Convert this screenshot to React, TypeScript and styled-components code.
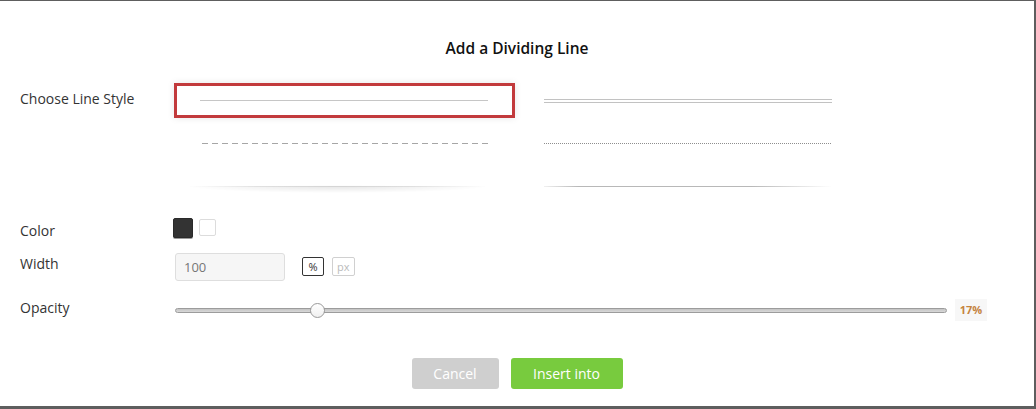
import React from 'react';
import styled, { createGlobalStyle } from 'styled-components';

const GlobalStyle = createGlobalStyle`
  html, body {
    margin: 0;
    padding: 0;
    background: #5e5e5e;
    font-family: 'Open Sans', 'Liberation Sans', sans-serif;
  }
`;

const Dialog = styled.div`
  width: 1034px;
  height: 405px;
  margin-top: 1px;
  background: #fff;
  display: flex;
  flex-direction: column;
  color: #333;
`;

const Title = styled.h2`
  margin: 37px 0 0;
  height: 21px;
  line-height: 21px;
  font-size: 15.5px;
  font-weight: 600;
  color: #111;
  text-align: center;
`;

const Form = styled.div`
  padding: 0 20px;
  display: flex;
  flex-direction: column;
`;

const Row = styled.div<{ $top: number }>`
  display: flex;
  align-items: flex-start;
  margin-top: ${(p) => p.$top}px;
`;

const Label = styled.label<{ $pad?: number }>`
  width: 155px;
  flex-shrink: 0;
  padding-top: ${(p) => p.$pad ?? 0}px;
  font-size: 14px;
  line-height: 20px;
  color: #333;
`;

const StyleGrid = styled.div`
  margin-left: -1px;
  display: grid;
  grid-template-columns: 341px 341px;
  grid-auto-rows: 35px;
  column-gap: 3px;
  row-gap: 8px;
`;

const StyleCell = styled.div<{ $selected?: boolean }>`
  box-sizing: border-box;
  display: flex;
  align-items: center;
  padding: 0 24px 0 23px;
  border: 3px solid ${(p) => (p.$selected ? '#c23a3c' : 'transparent')};
  box-shadow: ${(p) => (p.$selected ? '0 0 7px rgba(0, 0, 0, 0.1)' : 'none')};
  cursor: pointer;
`;

const SolidLine = styled.div`
  width: 100%;
  height: 1px;
  background: #c6c6c6;
`;

const DoubleLine = styled.div`
  width: 100%;
  height: 2px;
  border-top: 1px solid #c2c2c2;
  border-bottom: 1px solid #c2c2c2;
`;

const DashedLine = styled.div`
  width: 100%;
  height: 1px;
  margin-left: 2px;
  background: repeating-linear-gradient(to right, #a6a6a6 0 6px, transparent 6px 10px);
`;

const DottedLine = styled.div`
  width: 100%;
  height: 1px;
  background: repeating-linear-gradient(to right, #8e8e8e 0 1px, transparent 1px 2px);
`;

const ShadowLine = styled.div`
  width: 305px;
  height: 7px;
  margin: 5px 0 0 -13px;
  border-top: 1px solid transparent;
  background:
    linear-gradient(to right, rgba(0, 0, 0, 0), rgba(0, 0, 0, 0.08) 25%, rgba(0, 0, 0, 0.08) 75%, rgba(0, 0, 0, 0)) top / 100% 1px no-repeat,
    radial-gradient(ellipse 50% 100% at 50% 0, rgba(0, 0, 0, 0.1), rgba(0, 0, 0, 0) 100%);
`;

const FadeLine = styled.div`
  width: 100%;
  height: 1px;
  background: linear-gradient(to right, rgba(180, 180, 180, 0.2), #b8b8b8 12%, #b8b8b8 72%, rgba(180, 180, 180, 0));
`;

const Swatches = styled.div`
  display: flex;
  align-items: flex-start;
  gap: 6px;
  margin-left: -2px;
`;

const Swatch = styled.div<{ $color: string; $selected?: boolean }>`
  box-sizing: border-box;
  width: ${(p) => (p.$selected ? 20 : 17)}px;
  height: ${(p) => (p.$selected ? 20 : 17)}px;
  margin-top: ${(p) => (p.$selected ? 0 : 1)}px;
  border-radius: 2px;
  background: ${(p) => p.$color};
  border: 1px solid ${(p) => (p.$selected ? '#2a2a2a' : '#dcdcdc')};
  box-shadow: ${(p) => (p.$selected ? '0 1px 0 #9a9a9a' : 'none')};
`;

const WidthInput = styled.input`
  box-sizing: border-box;
  width: 110px;
  height: 28px;
  padding: 0 8px;
  border: 1px solid #dedede;
  border-radius: 3px;
  background: #f6f6f6;
  font-family: inherit;
  font-size: 13px;
  color: #777;
  outline: none;
`;

const Units = styled.div`
  display: flex;
  gap: 8px;
  margin: 4px 0 0 17px;
`;

const UnitButton = styled.button<{ $active?: boolean }>`
  box-sizing: border-box;
  height: 19px;
  padding: 0 4px;
  min-width: 22px;
  border: 1px solid ${(p) => (p.$active ? '#333' : '#d0d0d0')};
  border-radius: 2px;
  background: #fff;
  font-family: inherit;
  font-size: 11px;
  line-height: 17px;
  color: ${(p) => (p.$active ? '#333' : '#bbb')};
`;

const SliderWrap = styled.div`
  display: flex;
  align-items: center;
  height: 24px;
  gap: 8px;
`;

const Track = styled.div`
  position: relative;
  box-sizing: border-box;
  width: 772px;
  height: 5px;
  border: 1px solid #9c9c9c;
  border-radius: 3px;
  background: linear-gradient(to bottom, #c4c4c4, #d8d8d8);
`;

const Thumb = styled.div`
  position: absolute;
  top: 50%;
  width: 15px;
  height: 15px;
  box-sizing: border-box;
  margin-top: -7.5px;
  border-radius: 50%;
  border: 1px solid #9a9a9a;
  background: linear-gradient(to bottom, #ffffff, #f0f0f0);
`;

const Badge = styled.span`
  box-sizing: border-box;
  width: 32px;
  height: 22px;
  line-height: 22px;
  text-align: center;
  background: #f7f7f7;
  font-size: 11px;
  font-weight: 700;
  color: #c5843f;
`;

const Footer = styled.div`
  display: flex;
  justify-content: center;
  gap: 12px;
  margin-top: 36px;
`;

const Button = styled.button<{ $primary?: boolean }>`
  height: 31px;
  padding: 0;
  width: ${(p) => (p.$primary ? 112 : 87)}px;
  border: none;
  border-radius: 3px;
  background: ${(p) => (p.$primary ? '#78cb3e' : '#cfcfcf')};
  color: #fff;
  font-family: inherit;
  font-size: 14px;
  cursor: pointer;
`;

export default function App() {
  const opacity = 17;
  const thumbLeft = 134.5;

  return (
    <>
      <GlobalStyle />
      <Dialog>
        <Title>Add a Dividing Line</Title>
        <Form>
          <Row $top={24}>
            <Label $pad={6}>Choose Line Style</Label>
            <StyleGrid>
              <StyleCell $selected>
                <SolidLine />
              </StyleCell>
              <StyleCell>
                <DoubleLine />
              </StyleCell>
              <StyleCell>
                <DashedLine />
              </StyleCell>
              <StyleCell>
                <DottedLine />
              </StyleCell>
              <StyleCell>
                <ShadowLine />
              </StyleCell>
              <StyleCell>
                <FadeLine />
              </StyleCell>
            </StyleGrid>
          </Row>
          <Row $top={14}>
            <Label $pad={3}>Color</Label>
            <Swatches>
              <Swatch $color="#333" $selected />
              <Swatch $color="#fff" />
            </Swatches>
          </Row>
          <Row $top={12}>
            <Label $pad={1}>Width</Label>
            <WidthInput defaultValue="100" />
            <Units>
              <UnitButton $active>%</UnitButton>
              <UnitButton>px</UnitButton>
            </Units>
          </Row>
          <Row $top={17}>
            <Label>Opacity</Label>
            <SliderWrap>
              <Track>
                <Thumb style={{ left: thumbLeft - 1 }} />
              </Track>
              <Badge>{opacity}%</Badge>
            </SliderWrap>
          </Row>
        </Form>
        <Footer>
          <Button>Cancel</Button>
          <Button $primary>Insert into</Button>
        </Footer>
      </Dialog>
    </>
  );
}
